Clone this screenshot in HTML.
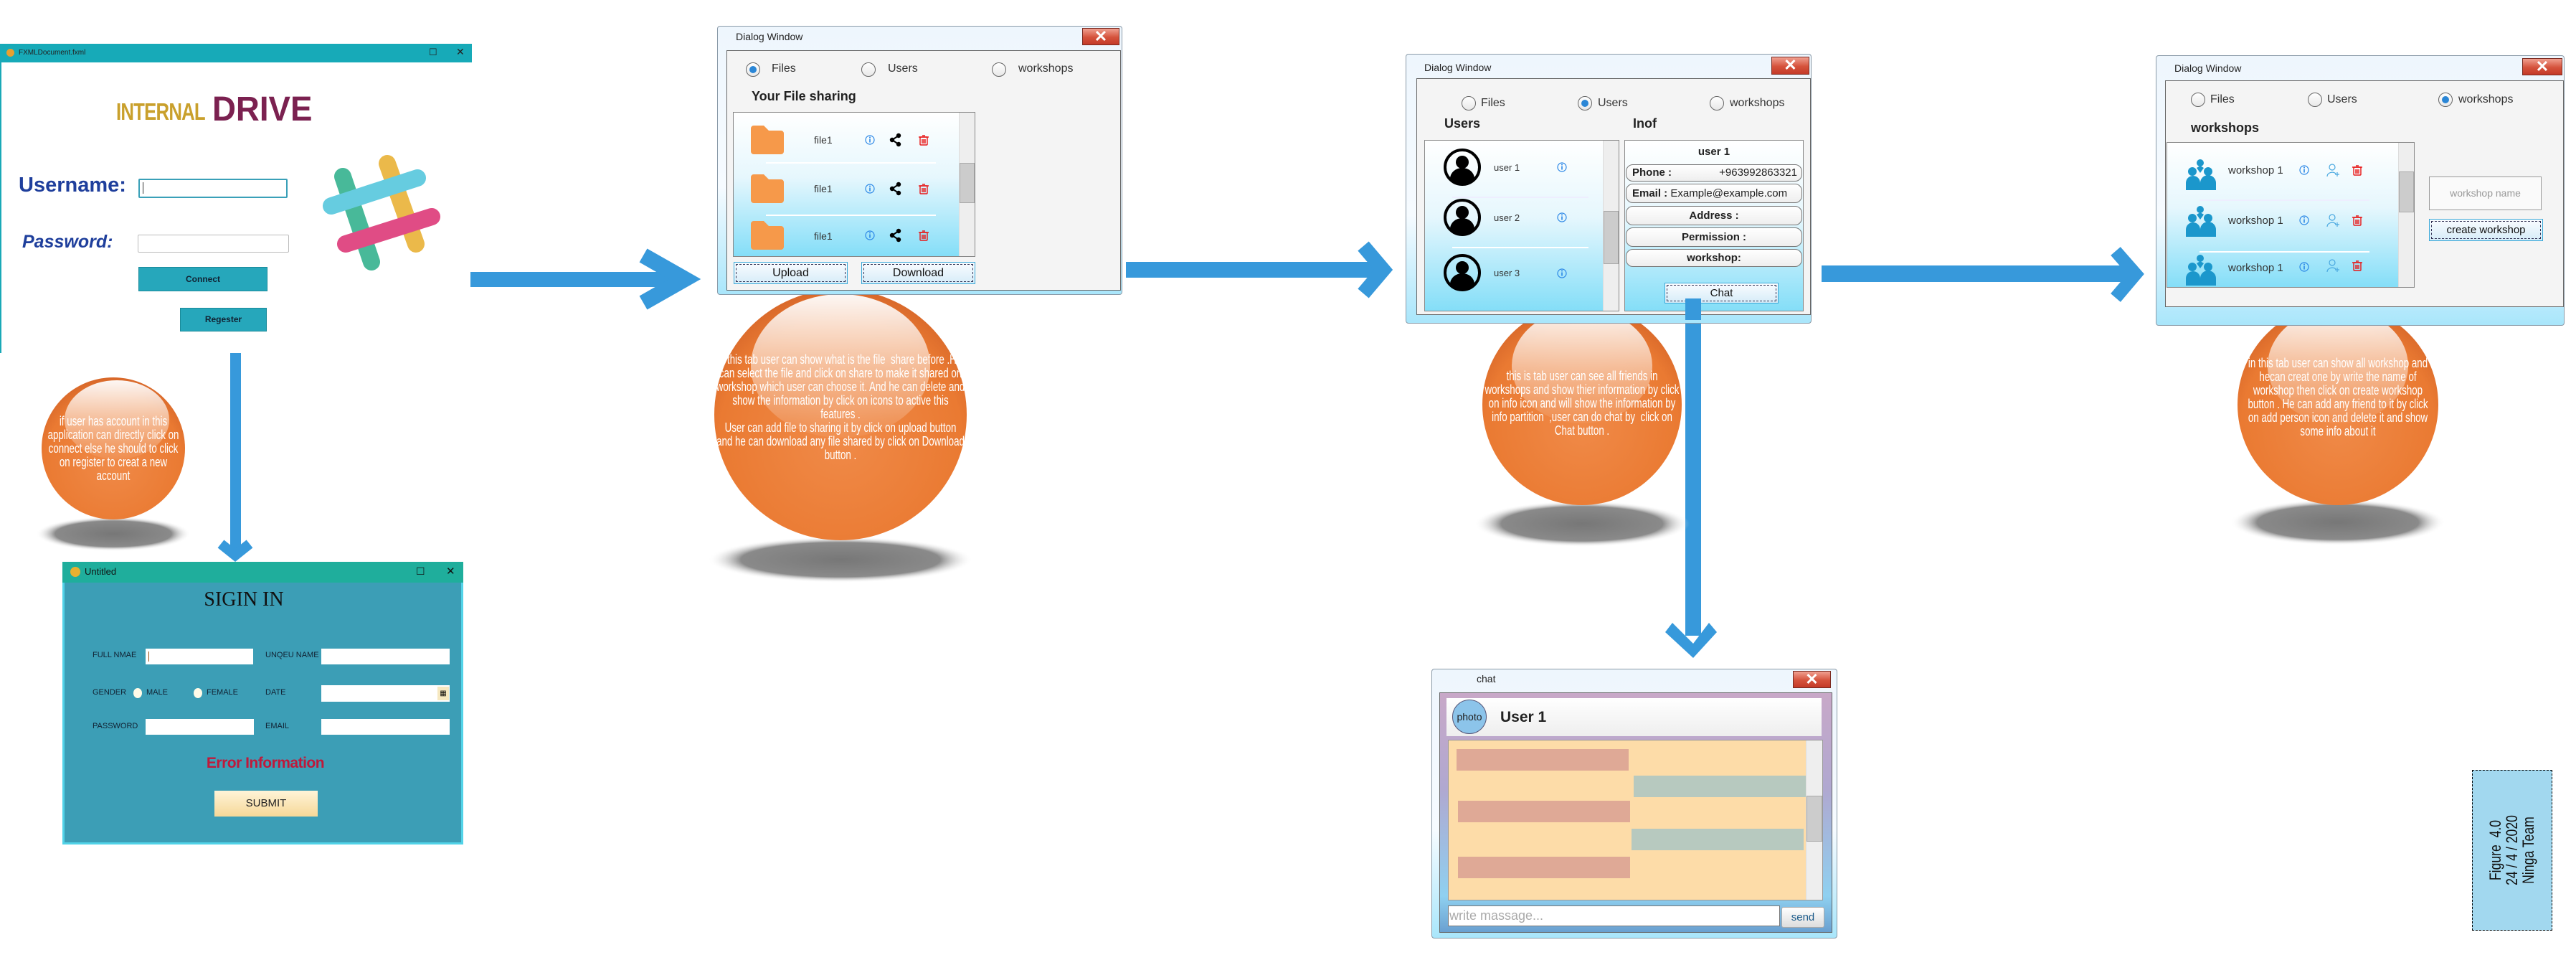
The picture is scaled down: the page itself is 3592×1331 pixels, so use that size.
<!DOCTYPE html>
<html><head><meta charset="utf-8">
<style>
*{margin:0;padding:0;box-sizing:border-box}
body{width:3592px;height:1331px;background:#fff;position:relative;overflow:hidden;font-family:"Liberation Sans",sans-serif}
.a{position:absolute}
.dlg{position:absolute;border:1px solid #8a9aa8;border-radius:4px;background:linear-gradient(180deg,#eef6fd 0%,#f6fbff 60%,#a9e6fb 100%)}
.dlg .tt{position:absolute;font-size:14px;color:#222}
.xb{position:absolute;border:1px solid #7a2a20;background:linear-gradient(#f0a090,#d5523c 55%,#c43a28);color:#fff;font-size:22px;font-weight:bold;text-align:center;line-height:22px}
.panel{position:absolute;border:1px solid #666;background:#f4f4f4}
.rad{position:absolute;width:20px;height:20px;border-radius:50%;border:1px solid #666;background:linear-gradient(#fff,#e8e8e8)}
.rad.on::after{content:"";position:absolute;left:4px;top:4px;width:10px;height:10px;border-radius:50%;background:#2a86d6}
.lbl{position:absolute;font-size:16px;color:#333}
.list{position:absolute;border:1px solid #888;background:linear-gradient(180deg,#fff 0%,#e6f7fd 45%,#84def8 100%)}
.sb{position:absolute;top:0;bottom:0;right:0;width:22px;background:#eee;border-left:1px solid #ddd}
.btn{position:absolute;border:1px solid #3aa8d8;outline:1px dashed #335;outline-offset:-4px;background:linear-gradient(#fafcff,#d6ecf8);font-size:16px;color:#111;text-align:center}
.bub{position:absolute;color:#fff;text-align:center;font-size:18px;line-height:19px;transform:scaleX(0.74);transform-origin:center top}
.pill{position:absolute;left:2267px;width:246px;border:1px solid #777;border-radius:10px;background:linear-gradient(#fff,#eee);font-size:15px;font-weight:bold;color:#222;text-align:center}
</style></head><body>

<svg class="a" style="left:0;top:0" width="3592" height="1331">
<defs>
<radialGradient id="og" cx="50%" cy="60%" r="60%">
<stop offset="0" stop-color="#f08a48"/><stop offset="0.8" stop-color="#ea7a32"/><stop offset="1" stop-color="#d8682a"/></radialGradient>
<linearGradient id="hl" x1="0" y1="0" x2="0" y2="1">
<stop offset="0" stop-color="#fff" stop-opacity="0.95"/><stop offset="1" stop-color="#fff" stop-opacity="0.05"/></linearGradient>
<radialGradient id="sh" cx="50%" cy="50%" r="50%">
<stop offset="0" stop-color="#777"/><stop offset="0.75" stop-color="#8a8a8a"/><stop offset="1" stop-color="#fff" stop-opacity="0"/></radialGradient>
</defs>
<g fill="#3799db" stroke="none">
<rect x="375" y="379" width="575" height="21"/>
<polyline points="897,356 955,389 897,422" fill="none" stroke="#3799db" stroke-width="22"/>
<rect x="321" y="466" width="15" height="300"/>
<polyline points="308,758 328,774 348,758" fill="none" stroke="#3799db" stroke-width="14"/>
<rect x="1570" y="365" width="360" height="22"/>
<polyline points="1901,343 1929,376 1901,409" fill="none" stroke="#3799db" stroke-width="20"/>
<rect x="2540" y="370" width="440" height="23"/>
<polyline points="2950,350 2978,382 2950,415" fill="none" stroke="#3799db" stroke-width="18"/>
<rect x="2350" y="416" width="22" height="470"/>
<polygon points="2322,881 2332,868 2361,897 2383,868 2394,881 2361,917"/>
</g>
<ellipse cx="158" cy="744" rx="108" ry="24" fill="url(#sh)"/>
<ellipse cx="1172" cy="780" rx="185" ry="32" fill="url(#sh)"/>
<ellipse cx="2206" cy="730" rx="150" ry="32" fill="url(#sh)"/>
<ellipse cx="3260" cy="728" rx="150" ry="32" fill="url(#sh)"/>
<ellipse cx="158" cy="625" rx="100" ry="99" fill="url(#og)"/>
<ellipse cx="163" cy="585" rx="73" ry="55" fill="url(#hl)"/>
<ellipse cx="1172" cy="578" rx="176" ry="175" fill="url(#og)"/>
<ellipse cx="1172" cy="510" rx="125" ry="100" fill="url(#hl)"/>
<ellipse cx="2206" cy="564" rx="139" ry="140" fill="url(#og)"/>
<ellipse cx="2206" cy="510" rx="98" ry="80" fill="url(#hl)"/>
<ellipse cx="3260" cy="564" rx="140" ry="140" fill="url(#og)"/>
<ellipse cx="3260" cy="510" rx="98" ry="80" fill="url(#hl)"/>
</svg>

<div class="bub" style="left:25px;top:578px;width:266px">if user has account in this application can directly click on connect else he should to click on register to creat a new account</div>
<div class="bub" style="left:937px;top:492px;width:470px">In this tab user can show what is the file&nbsp; share before .He&nbsp; can select the file and click on share to make it shared on workshop which user can choose it. And he can delete and show the information by click on icons to active this features .<br>User can add file to sharing it by click on upload button and he can download any file shared by click on Download button .</div>
<div class="bub" style="left:2020px;top:515px;width:372px">this is tab user can see all friends in workshops and show thier information by click on info icon and will show the information by info partition&nbsp; ,user can do chat by&nbsp; click on Chat button .</div>
<div class="bub" style="left:3080px;top:497px;width:360px">in this tab user can show all workshop and hecan creat one by write the name of workshop then click on create workshop button . He can add any friend to it by click on add person icon and delete it and show some info about it</div>

<!-- LOGIN WINDOW -->
<div class="a" style="left:0;top:61px;width:656px;height:431px;background:#fff;border-left:2px solid #1aa9b7">
<div class="a" style="left:0;top:0;width:656px;height:26px;background:#17aab8"></div>
<div class="a" style="left:7px;top:7px;width:11px;height:11px;border-radius:50%;background:#e8a030"></div>
<div class="a" style="left:24px;top:7px;font-size:10px;color:#222">FXMLDocument.fxml</div>
<div class="a" style="left:596px;top:4px;font-size:13px;color:#222">☐</div>
<div class="a" style="left:634px;top:3px;font-size:14px;color:#222">✕</div>
<div class="a" style="left:160px;top:76px;font-size:33px;font-weight:bold;color:#c9a02c;transform:scaleX(0.78);transform-origin:left top;letter-spacing:-1px">INTERNAL</div>
<div class="a" style="left:294px;top:64px;font-size:48px;font-weight:bold;color:#7b2150;transform:scaleX(0.95);transform-origin:left top">DRIVE</div>
<div class="a" style="left:24px;top:181px;font-size:29px;font-weight:bold;color:#1f3f9c">Username:</div>
<div class="a" style="left:29px;top:262px;font-size:25px;font-weight:bold;font-style:italic;color:#1f3f9c">Password:</div>
<div class="a" style="left:191px;top:188px;width:208px;height:27px;border:2px solid #3aa0b8;border-radius:2px"></div>
<div class="a" style="left:197px;top:193px;width:1px;height:16px;background:#333"></div>
<div class="a" style="left:190px;top:266px;width:211px;height:25px;border:1px solid #bbb;border-radius:2px"></div>
<div class="a" style="left:191px;top:311px;width:180px;height:34px;background:#26a7bb;border:1px solid #1a8a9a;font-size:12px;font-weight:bold;color:#123;text-align:center;line-height:32px">Connect</div>
<div class="a" style="left:249px;top:368px;width:121px;height:33px;background:#26a7bb;border:1px solid #1a8a9a;font-size:12px;font-weight:bold;color:#123;text-align:center;line-height:31px">Regester</div>
</div>
<svg class="a" style="left:0;top:0" width="656" height="492">
<g stroke-linecap="round" stroke-width="24" opacity="0.8" style="mix-blend-mode:multiply">
<line x1="478" y1="246" x2="518" y2="365" stroke="#1aa880"/>
<line x1="540" y1="228" x2="580" y2="340" stroke="#e6a81c"/>
<line x1="462" y1="287" x2="582" y2="248" stroke="#3fc0d8"/>
<line x1="482" y1="340" x2="602" y2="302" stroke="#d81f66"/>
</g>
</svg>

<!-- SIGNUP WINDOW -->
<div class="a" style="left:87px;top:783px;width:559px;height:394px;background:#3c9eb6;border:3px solid #52d3e8;border-top:none">
<div class="a" style="left:-3px;top:0;width:559px;height:29px;background:#1fae9c"></div>
<div class="a" style="left:8px;top:7px;width:14px;height:14px;border-radius:50%;background:#e8b030"></div>
<div class="a" style="left:28px;top:6px;font-size:13px;color:#111">Untitled</div>
<div class="a" style="left:490px;top:5px;font-size:14px;color:#111">☐</div>
<div class="a" style="left:532px;top:4px;font-size:15px;color:#111">✕</div>
<div class="a" style="left:185px;top:37px;width:130px;text-align:center;font-family:'Liberation Serif',serif;font-size:28px;color:#111">SIGIN IN</div>
<div class="a" style="left:39px;top:124px;font-size:11px;color:#123">FULL NMAE</div>
<div class="a" style="left:113px;top:121px;width:150px;height:22px;background:#fff"></div>
<div class="a" style="left:117px;top:125px;width:1px;height:14px;background:#a05010"></div>
<div class="a" style="left:280px;top:124px;font-size:11px;color:#123">UNQEU NAME</div>
<div class="a" style="left:358px;top:121px;width:179px;height:22px;background:#fff"></div>
<div class="a" style="left:39px;top:176px;font-size:11px;color:#123">GENDER</div>
<div class="a" style="left:96px;top:176px;width:12px;height:14px;border-radius:50%;background:#fffbe8"></div>
<div class="a" style="left:114px;top:176px;font-size:11px;color:#123">MALE</div>
<div class="a" style="left:180px;top:176px;width:12px;height:14px;border-radius:50%;background:#fffbe8"></div>
<div class="a" style="left:198px;top:176px;font-size:11px;color:#123">FEMALE</div>
<div class="a" style="left:280px;top:176px;font-size:11px;color:#123">DATE</div>
<div class="a" style="left:358px;top:172px;width:179px;height:23px;background:#fff"></div>
<div class="a" style="left:520px;top:174px;width:16px;height:19px;background:#f6e8c0;font-size:10px;text-align:center;line-height:19px">▦</div>
<div class="a" style="left:39px;top:223px;font-size:11px;color:#123">PASSWORD</div>
<div class="a" style="left:113px;top:219px;width:151px;height:22px;background:#fff"></div>
<div class="a" style="left:280px;top:223px;font-size:11px;color:#123">EMAIL</div>
<div class="a" style="left:358px;top:219px;width:179px;height:22px;background:#fff"></div>
<div class="a" style="left:150px;top:269px;width:260px;text-align:center;font-size:21px;font-weight:bold;color:#c0183a;letter-spacing:-0.5px">Error Information</div>
<div class="a" style="left:209px;top:319px;width:144px;height:36px;background:linear-gradient(#fff4d8,#f6d898);font-size:15px;color:#222;text-align:center;line-height:36px">SUBMIT</div>
</div>

<!-- FILES DIALOG -->
<div class="dlg" style="left:1000px;top:36px;width:565px;height:375px">
<div class="tt" style="left:25px;top:6px">Dialog Window</div>
<div class="xb" style="left:508px;top:2px;width:52px;height:24px">✕</div>
<div class="panel" style="left:12px;top:33px;width:550px;height:335px">
<div class="rad on" style="left:26px;top:16px"></div><div class="lbl" style="left:62px;top:16px">Files</div>
<div class="rad" style="left:187px;top:16px"></div><div class="lbl" style="left:224px;top:16px">Users</div>
<div class="rad" style="left:369px;top:16px"></div><div class="lbl" style="left:406px;top:16px">workshops</div>
<div class="lbl" style="left:34px;top:53px;font-size:18px;font-weight:bold;color:#222">Your File sharing</div>
</div>
</div>
<div class="list" style="left:1022px;top:156px;width:338px;height:202px">
<div class="sb"><div class="a" style="left:0;top:70px;width:21px;height:56px;background:#ccc;border:1px solid #aaa"></div></div>
<div class="a" style="left:45px;top:69px;width:237px;height:2px;background:#fff"></div>
<div class="a" style="left:45px;top:142px;width:237px;height:2px;background:#fff"></div>
</div>
<div class="btn" style="left:1023px;top:365px;width:159px;height:31px;line-height:29px">Upload</div>
<div class="btn" style="left:1201px;top:365px;width:159px;height:31px;line-height:29px">Download</div>

<svg class="a" style="left:1040px;top:170px" width="270" height="190">
<defs>
<g id="fold"><path d="M0 4a4 4 0 0 1 4-4h14l7 7h17a4 4 0 0 1 4 4v25a4 4 0 0 1-4 4H4a4 4 0 0 1-4-4z" fill="#f6994a"/></g>
<g id="inf"><circle r="6" fill="none" stroke="#2a86e6" stroke-width="1.2"/><rect x="-0.8" y="-1.5" width="1.6" height="5" fill="#2a86e6"/><circle cy="-3.5" r="1" fill="#2a86e6"/></g>
<g id="shr"><circle cx="-5" r="3.2"/><circle cx="4" cy="-6" r="3.2"/><circle cx="4" cy="6" r="3.2"/><path d="M-5 0L4-6M-5 0L4 6" stroke="#000" stroke-width="2"/></g>
<g id="trs" fill="none" stroke="#e81818" stroke-width="1.4"><rect x="-5" y="-4" width="10" height="11" rx="1"/><path d="M-7-4h14M-2-6h4M-2-1v6M0-1v6M2-1v6"/></g>
</defs>
<g transform="translate(7,5)"><use href="#fold"/></g>
<g transform="translate(7,73)"><use href="#fold"/></g>
<g transform="translate(7,138)"><use href="#fold"/></g>
<text x="95" y="30" font-size="14" fill="#333" font-family="Liberation Sans">file1</text>
<text x="95" y="98" font-size="14" fill="#333" font-family="Liberation Sans">file1</text>
<text x="95" y="164" font-size="14" fill="#333" font-family="Liberation Sans">file1</text>
<use href="#inf" x="173" y="25"/><use href="#inf" x="173" y="93"/><use href="#inf" x="173" y="158"/>
<use href="#shr" x="209" y="25"/><use href="#shr" x="209" y="93"/><use href="#shr" x="209" y="158"/>
<use href="#trs" x="248" y="25"/><use href="#trs" x="248" y="93"/><use href="#trs" x="248" y="158"/>
</svg>

<!-- USERS DIALOG -->
<div class="dlg" style="left:1960px;top:75px;width:566px;height:376px">
<div class="tt" style="left:25px;top:10px">Dialog Window</div>
<div class="xb" style="left:509px;top:3px;width:53px;height:25px">✕</div>
<div class="panel" style="left:14px;top:33px;width:550px;height:330px">
<div class="rad" style="left:62px;top:24px"></div><div class="lbl" style="left:89px;top:25px">Files</div>
<div class="rad on" style="left:224px;top:24px"></div><div class="lbl" style="left:252px;top:25px">Users</div>
<div class="rad" style="left:408px;top:24px"></div><div class="lbl" style="left:436px;top:25px">workshops</div>
<div class="lbl" style="left:38px;top:52px;font-size:18px;font-weight:bold;color:#222">Users</div>
<div class="lbl" style="left:301px;top:52px;font-size:18px;font-weight:bold;color:#222">Inof</div>
</div>
</div>
<div class="list" style="left:1986px;top:195px;width:272px;height:239px">
<div class="sb"><div class="a" style="left:0;top:98px;width:21px;height:74px;background:#ccc;border:1px solid #aaa"></div></div>
<div class="a" style="left:38px;top:78px;width:190px;height:2px;background:#eef"></div>
<div class="a" style="left:38px;top:148px;width:190px;height:2px;background:#fff"></div>
</div>
<svg class="a" style="left:2010px;top:205px" width="220" height="220">
<defs><g id="av"><circle r="24" fill="none" stroke="#000" stroke-width="4"/><circle cy="-7" r="9"/><path d="M-17 16a17 15 0 0 1 34 0a24 24 0 0 1-34 0z"/></g></defs>
<use href="#av" x="29" y="28"/><use href="#av" x="29" y="98"/><use href="#av" x="29" y="175"/>
<text x="73" y="33" font-size="13" fill="#333" font-family="Liberation Sans">user 1</text>
<text x="73" y="103" font-size="13" fill="#333" font-family="Liberation Sans">user 2</text>
<text x="73" y="180" font-size="13" fill="#333" font-family="Liberation Sans">user 3</text>
<use href="#inf" x="168" y="28"/><use href="#inf" x="168" y="98"/><use href="#inf" x="168" y="176"/>
</svg>
<div class="list" style="left:2265px;top:195px;width:250px;height:239px"></div>
<div class="a" style="left:2265px;top:203px;width:250px;text-align:center;font-size:15px;font-weight:bold;color:#222">user 1</div>
<div class="pill" style="top:229px;height:24px;line-height:22px;text-align:left;padding-left:8px">Phone :<span style="position:absolute;right:6px;font-weight:normal">+963992863321</span></div>
<div class="pill" style="top:256px;height:27px;line-height:25px;text-align:left;padding-left:8px">Email : <span style="font-weight:normal">Example@example.com</span></div>
<div class="pill" style="top:287px;height:27px;line-height:25px">Address :</div>
<div class="pill" style="top:317px;height:27px;line-height:25px">Permission :</div>
<div class="pill" style="top:347px;height:25px;line-height:23px">workshop:</div>
<div class="btn" style="left:2321px;top:394px;width:159px;height:29px;line-height:27px;font-size:15px">Chat</div>
<div class="a" style="left:2350px;top:416px;width:22px;height:30px;background:#3799db"></div>

<!-- WORKSHOPS DIALOG -->
<div class="dlg" style="left:3006px;top:77px;width:570px;height:377px">
<div class="tt" style="left:25px;top:9px">Dialog Window</div>
<div class="xb" style="left:510px;top:3px;width:56px;height:24px">✕</div>
<div class="panel" style="left:12px;top:34px;width:556px;height:316px">
<div class="rad" style="left:35px;top:16px"></div><div class="lbl" style="left:62px;top:17px">Files</div>
<div class="rad" style="left:198px;top:16px"></div><div class="lbl" style="left:225px;top:17px">Users</div>
<div class="rad on" style="left:380px;top:16px"></div><div class="lbl" style="left:408px;top:17px">workshops</div>
<div class="lbl" style="left:35px;top:55px;font-size:18px;font-weight:bold;color:#222">workshops</div>
</div>
</div>
<div class="list" style="left:3021px;top:198px;width:346px;height:203px">
<div class="sb"><div class="a" style="left:0;top:40px;width:21px;height:57px;background:#ccc;border:1px solid #aaa"></div></div>
<div class="a" style="left:45px;top:79px;width:237px;height:2px;background:#eef"></div>
<div class="a" style="left:45px;top:151px;width:237px;height:2px;background:#fff"></div>
</div>
<svg class="a" style="left:3040px;top:210px" width="280" height="190">
<defs>
<g id="grp" fill="#1b97cc"><circle cx="20" cy="5" r="5"/><circle cx="9" cy="17" r="6"/><circle cx="31" cy="17" r="6"/><path d="M0 43v-10a10 10 0 0 1 20 0v10zM20 43v-10a11 11 0 0 1 22 0v10z"/><path d="M15 12l5-3 5 3-5 7z"/></g>
<g id="pad" fill="none" stroke="#4aa8e0" stroke-width="1.2"><circle cx="0" cy="-4" r="4"/><path d="M-7 9a7 6 0 0 1 12-4M4 6h6M7 3v6"/></g>
</defs>
<use href="#grp" x="8" y="12"/><use href="#grp" x="8" y="77"/><use href="#grp" x="8" y="145"/>
<text x="67" y="32" font-size="15" fill="#333" font-family="Liberation Sans">workshop 1</text>
<text x="67" y="102" font-size="15" fill="#333" font-family="Liberation Sans">workshop 1</text>
<text x="67" y="168" font-size="15" fill="#333" font-family="Liberation Sans">workshop 1</text>
<use href="#inf" x="173" y="27"/><use href="#inf" x="173" y="97"/><use href="#inf" x="173" y="162"/>
<use href="#pad" x="212" y="27"/><use href="#pad" x="212" y="97"/><use href="#pad" x="212" y="160"/>
<use href="#trs" x="247" y="27"/><use href="#trs" x="247" y="97"/><use href="#trs" x="247" y="160"/>
</svg>
<div class="a" style="left:3387px;top:246px;width:157px;height:47px;border:1px solid #999;background:#fafafa;font-size:14px;color:#999;text-align:center;line-height:45px">workshop name</div>
<div class="btn" style="left:3387px;top:305px;width:159px;height:31px;line-height:29px;font-size:15px">create workshop</div>

<!-- CHAT WINDOW -->
<div class="dlg" style="left:1996px;top:932px;width:566px;height:376px">
<div class="tt" style="left:62px;top:5px">chat</div>
<div class="xb" style="left:503px;top:2px;width:53px;height:24px">✕</div>
<div class="a" style="left:10px;top:32px;width:548px;height:335px;border:1px solid #666;background:linear-gradient(180deg,#c8a8c8 0%,#b0a8d0 40%,#8fd0f0 85%,#6aa0d0 100%)"></div>
<div class="a" style="left:20px;top:40px;width:523px;height:53px;background:linear-gradient(#fff,#eee)"></div>
<div class="a" style="left:28px;top:42px;width:48px;height:48px;border-radius:50%;background:#8cc4ea;border:1px solid #557;font-size:14px;text-align:center;line-height:46px;color:#222">photo</div>
<div class="a" style="left:95px;top:55px;font-size:21px;font-weight:bold;color:#222">User 1</div>
<div class="a" style="left:22px;top:98px;width:523px;height:224px;background:#fddca8;border:1px solid #999">
<div class="a" style="left:11px;top:12px;width:240px;height:30px;background:#dfa996"></div>
<div class="a" style="left:258px;top:49px;width:240px;height:30px;background:#b7c9bf"></div>
<div class="a" style="left:13px;top:84px;width:240px;height:30px;background:#dfa996"></div>
<div class="a" style="left:255px;top:123px;width:240px;height:30px;background:#b7c9bf"></div>
<div class="a" style="left:13px;top:162px;width:240px;height:30px;background:#dfa996"></div>
<div class="sb" style="width:23px"><div class="a" style="left:0;top:77px;width:22px;height:64px;background:#ccc;border:1px solid #aaa"></div></div>
</div>
<div class="a" style="left:22px;top:329px;width:463px;height:29px;background:#fff;border:1px solid #777;font-size:18px;color:#aaa;line-height:27px;padding-left:1px">write massage...</div>
<div class="a" style="left:487px;top:331px;width:60px;height:29px;border:1px solid #aaa;border-radius:3px;background:linear-gradient(#fff,#ddd);font-size:15px;color:#1a5a8a;text-align:center;line-height:27px">send</div>
</div>

<!-- FIGURE BOX -->
<div class="a" style="left:3447px;top:1073px;width:112px;height:224px;background:#a2d8ef;border:1px dashed #000"></div>
<div class="a" style="left:3391px;top:1150px;width:224px;height:70px;transform:rotate(-90deg) scaleX(0.8);transform-origin:center;text-align:center;font-size:22px;line-height:23px;color:#111;white-space:nowrap">Figure&nbsp;&nbsp;4.0<br>24 / 4 / 2020<br>Ninga Team</div>
</body></html>
